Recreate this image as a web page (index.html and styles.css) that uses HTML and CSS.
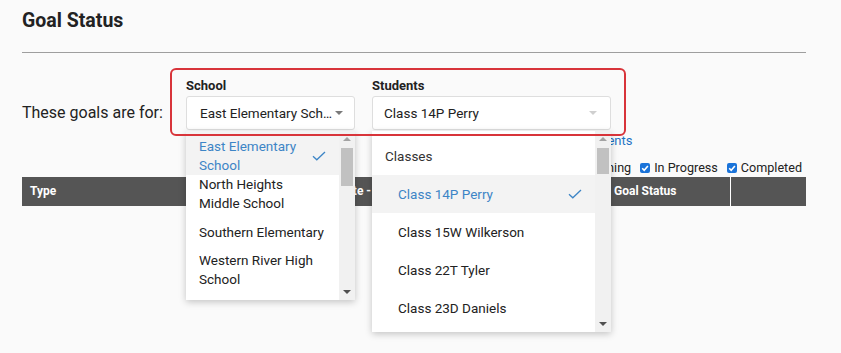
FILE: index.html
```html
<!DOCTYPE html>
<html lang="en">
<head>
<meta charset="utf-8">
<title>Goal Status</title>
<link rel="stylesheet" href="styles.css">
</head>
<body>
<div class="page">
  <h1 class="title">Goal Status</h1>
  <div class="rule"></div>

  <div class="for-row">
    <div class="for-label">These goals are for:</div>
    <div class="pickers">
      <div class="field field-school">
        <div class="field-label">School</div>
        <div class="select">
          <span class="select-text">East Elementary Sch…</span>
          <span class="caret"></span>
        </div>
        <div class="menu menu-school">
          <div class="menu-list">
            <div class="opt opt-first opt-selected">
              <span class="opt-text">East Elementary<br>School</span>
              <svg class="check" width="14" height="10" viewBox="0 0 14 10"><path d="M1 5.2 L4.8 8.8 L13 1" fill="none" stroke="#3d85c6" stroke-width="1.3"/></svg>
            </div>
            <div class="opt"><span class="opt-text">North Heights<br>Middle School</span></div>
            <div class="opt"><span class="opt-text">Southern Elementary</span></div>
            <div class="opt"><span class="opt-text">Western River High<br>School</span></div>
          </div>
          <div class="sb">
            <span class="sb-up"></span>
            <span class="sb-thumb sb-thumb-school"></span>
            <span class="sb-down"></span>
          </div>
        </div>
      </div>

      <div class="field field-students">
        <div class="field-label">Students</div>
        <div class="select select-students">
          <span class="select-text">Class 14P Perry</span>
          <span class="caret caret-light"></span>
        </div>
        <div class="menu menu-students">
          <div class="menu-list">
            <div class="opt opt-first opt-header"><span class="opt-text">Classes</span></div>
            <div class="opt opt-class opt-selected">
              <span class="opt-text">Class 14P Perry</span>
              <svg class="check" width="14" height="10" viewBox="0 0 14 10"><path d="M1 5.2 L4.8 8.8 L13 1" fill="none" stroke="#3d85c6" stroke-width="1.3"/></svg>
            </div>
            <div class="opt opt-class"><span class="opt-text">Class 15W Wilkerson</span></div>
            <div class="opt opt-class"><span class="opt-text">Class 22T Tyler</span></div>
            <div class="opt opt-class"><span class="opt-text">Class 23D Daniels</span></div>
          </div>
          <div class="sb">
            <span class="sb-up"></span>
            <span class="sb-thumb sb-thumb-students"></span>
            <span class="sb-down"></span>
          </div>
        </div>
      </div>

      <div class="annot"></div>
    </div>
  </div>

  <div class="link-row"><a class="link" href="#">Select Students</a></div>

  <div class="filters">
    <label class="filter"><span class="cb"><svg width="10" height="10" viewBox="0 0 10 10"><path d="M2.2 5.2 L4.2 7.2 L7.9 2.9" fill="none" stroke="#fff" stroke-width="1.6"/></svg></span>Upcoming</label>
    <label class="filter"><span class="cb"><svg width="10" height="10" viewBox="0 0 10 10"><path d="M2.2 5.2 L4.2 7.2 L7.9 2.9" fill="none" stroke="#fff" stroke-width="1.6"/></svg></span>In Progress</label>
    <label class="filter"><span class="cb"><svg width="10" height="10" viewBox="0 0 10 10"><path d="M2.2 5.2 L4.2 7.2 L7.9 2.9" fill="none" stroke="#fff" stroke-width="1.6"/></svg></span>Completed</label>
  </div>

  <div class="thead">
    <div class="th">Type</div>
    <div class="th">Start Date - End Date</div>
    <div class="th">Goal Status</div>
    <div class="th th-last"></div>
  </div>
</div>
</body>
</html>
```

FILE: styles.css
```css
* { box-sizing: border-box; }

html, body {
  margin: 0;
  padding: 0;
  background: #fafafa;
}

body {
  min-height: 353px;
  font-family: Roboto, "Liberation Sans", Arial, sans-serif;
  color: #222;
}

.page {
  width: 806px;
  min-height: 353px;
  padding: 9px 0 0 22px;
}

.title {
  margin: 0;
  font-size: 19.5px;
  line-height: 24px;
  font-weight: 700;
  color: #222;
}

.rule {
  margin-top: 19px;
  height: 1px;
  background: #9e9e9e;
}

.for-row {
  display: flex;
  margin-top: 25px;
}

.for-label {
  flex: 0 0 164px;
  font-size: 16px;
  line-height: 34px;
  align-self: flex-end;
  color: #222;
}

.pickers {
  position: relative;
  display: flex;
  gap: 17px;
}

.field {
  position: relative;
}

.field-school { width: 169px; }
.field-students { width: 239px; }

.field-label {
  font-size: 13px;
  font-weight: 700;
  line-height: 16px;
  margin-bottom: 2px;
  color: #222;
}

.select {
  display: flex;
  align-items: center;
  height: 34px;
  padding: 0 11px 0 13px;
  background: #fff;
  border: 1px solid #dedede;
  border-radius: 3px;
  font-size: 13.5px;
  line-height: 32px;
  color: #222;
}

.select-students { padding-left: 11px; }

.select-text {
  flex: 1;
  white-space: nowrap;
  overflow: hidden;
}

.caret {
  flex: 0 0 8px;
  width: 0;
  height: 0;
  border-left: 4px solid transparent;
  border-right: 4px solid transparent;
  border-top: 4px solid #7a7a7a;
}

.caret-light { border-top-color: #cfcfcf; margin-right: 2px; }

.menu {
  position: absolute;
  left: 0;
  top: 53px;
  z-index: 2;
  display: flex;
  background: #fff;
  box-shadow: 0 2px 7px rgba(0, 0, 0, 0.22);
  overflow: hidden;
}

.menu-school { width: 169px; height: 169px; }
.menu-students { width: 239px; height: 201px; }

.menu-list {
  flex: 1;
  overflow: hidden;
}

.opt {
  display: flex;
  align-items: center;
  min-height: 38px;
  padding: 0 13px;
  font-size: 13.5px;
  line-height: 19px;
  color: #222;
  white-space: nowrap;
}

.opt-first { min-height: 44px; padding-top: 6px; }

.opt-text { flex: 1; }

.opt-selected {
  background: #f3f3f3;
  color: #3d85c6;
}

.opt-class { padding-left: 26px; }
.opt-header { color: #333; }

.check { flex: 0 0 14px; }

.sb {
  flex: 0 0 16px;
  display: flex;
  flex-direction: column;
  align-items: center;
  background: #f1f1f1;
}

.sb-up {
  margin-top: 6px;
  width: 0;
  height: 0;
  border-left: 4px solid transparent;
  border-right: 4px solid transparent;
  border-bottom: 4px solid #a3a3a3;
}

.sb-thumb {
  margin-top: 7px;
  width: 12px;
  background: #c1c1c1;
}

.sb-thumb-school { height: 38px; }
.sb-thumb-students { height: 26px; }

.sb-down {
  margin-top: auto;
  margin-bottom: 6px;
  width: 0;
  height: 0;
  border-left: 4px solid transparent;
  border-right: 4px solid transparent;
  border-top: 4px solid #505050;
}

.annot {
  position: absolute;
  left: -16px;
  top: -10px;
  right: -15px;
  bottom: -6px;
  z-index: 3;
  border: 2px solid #d8343a;
  border-radius: 6px;
  pointer-events: none;
}

.link-row {
  margin-top: 3px;
  padding-left: 520px;
  font-size: 13px;
  line-height: 16px;
}

.link {
  color: #1f74c4;
  text-decoration: none;
}

.filters {
  display: flex;
  justify-content: flex-end;
  gap: 9px;
  margin-top: 11px;
  padding-right: 4px;
  font-size: 12.6px;
  line-height: 16px;
  color: #222;
}

.filter {
  display: flex;
  align-items: center;
  gap: 4px;
}

.cb {
  display: flex;
  width: 10px;
  height: 10px;
  border-radius: 2px;
  background: #1a73d9;
}

.thead {
  display: grid;
  grid-template-columns: 279px 305px 124px 1fr;
  margin-top: 1px;
  height: 29px;
  background: #555;
}

.th {
  padding: 0 8px;
  font-size: 12px;
  font-weight: 700;
  line-height: 29px;
  color: #fff;
  white-space: nowrap;
  overflow: hidden;
}

.th-last {
  border-left: 1px solid #fff;
}
```
